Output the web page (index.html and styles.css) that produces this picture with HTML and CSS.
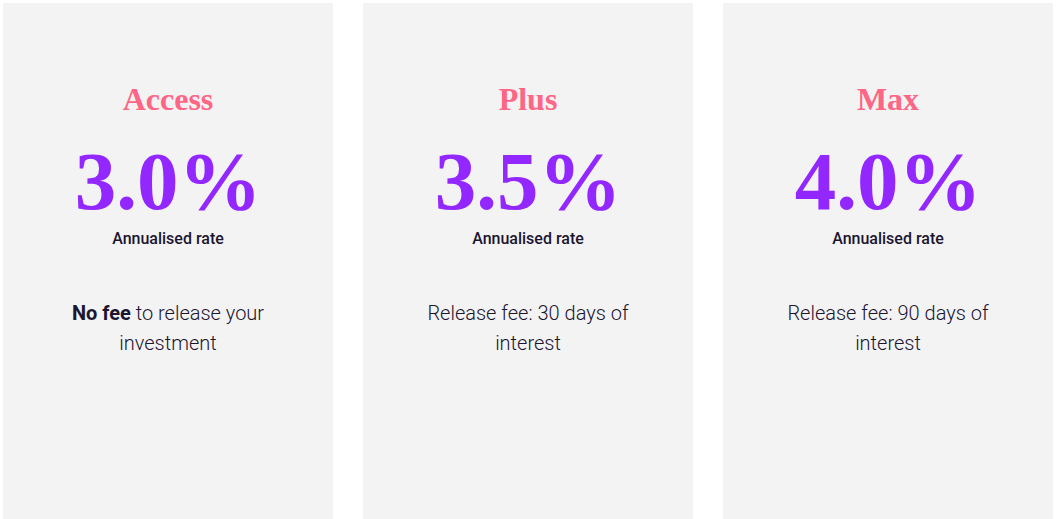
FILE: index.html
```
<!DOCTYPE html>
<html lang="en">
<head>
<meta charset="utf-8">
<link rel="stylesheet" href="styles.css">
</head>
<body>
<div class="plans">
  <div class="card">
    <h2 class="name">Access</h2>
    <div class="rate">3.0%</div>
    <div class="label">Annualised rate</div>
    <p class="desc"><strong>No fee</strong> to release your investment</p>
  </div>
  <div class="card">
    <h2 class="name">Plus</h2>
    <div class="rate">3.5%</div>
    <div class="label">Annualised rate</div>
    <p class="desc">Release fee: 30 days of interest</p>
  </div>
  <div class="card">
    <h2 class="name">Max</h2>
    <div class="rate">4.0%</div>
    <div class="label">Annualised rate</div>
    <p class="desc">Release fee: 90 days of interest</p>
  </div>
</div>
</body>
</html>
```
FILE: styles.css
```
html, body { margin: 0; padding: 0; background: #fff; overflow: hidden; }
body { font-family: Roboto, "Liberation Sans", sans-serif; color: #1b1530; }
.plans { display: flex; gap: 30px; padding: 3px 3px 0; }
.card { width: 330px; height: 516px; background: #f3f3f3; display: flex; flex-direction: column; align-items: center; text-align: center; padding-top: 79px; box-sizing: border-box; }
.name { margin: 0; font-family: "Liberation Serif", "DejaVu Serif", serif; font-weight: 700; font-size: 32px; line-height: 34px; color: #ff6584; }
.rate { margin-top: 25px; font-family: "Liberation Serif", "DejaVu Serif", serif; font-weight: 700; font-size: 83px; line-height: 80px; color: #9327ff; }
.label { margin-top: 8px; font-size: 16px; font-weight: 500; line-height: 20px; }
.desc { margin: 49px 0 0; width: 230px; font-size: 20px; font-weight: 300; line-height: 30px; }
.desc strong { font-weight: 700; }
```
